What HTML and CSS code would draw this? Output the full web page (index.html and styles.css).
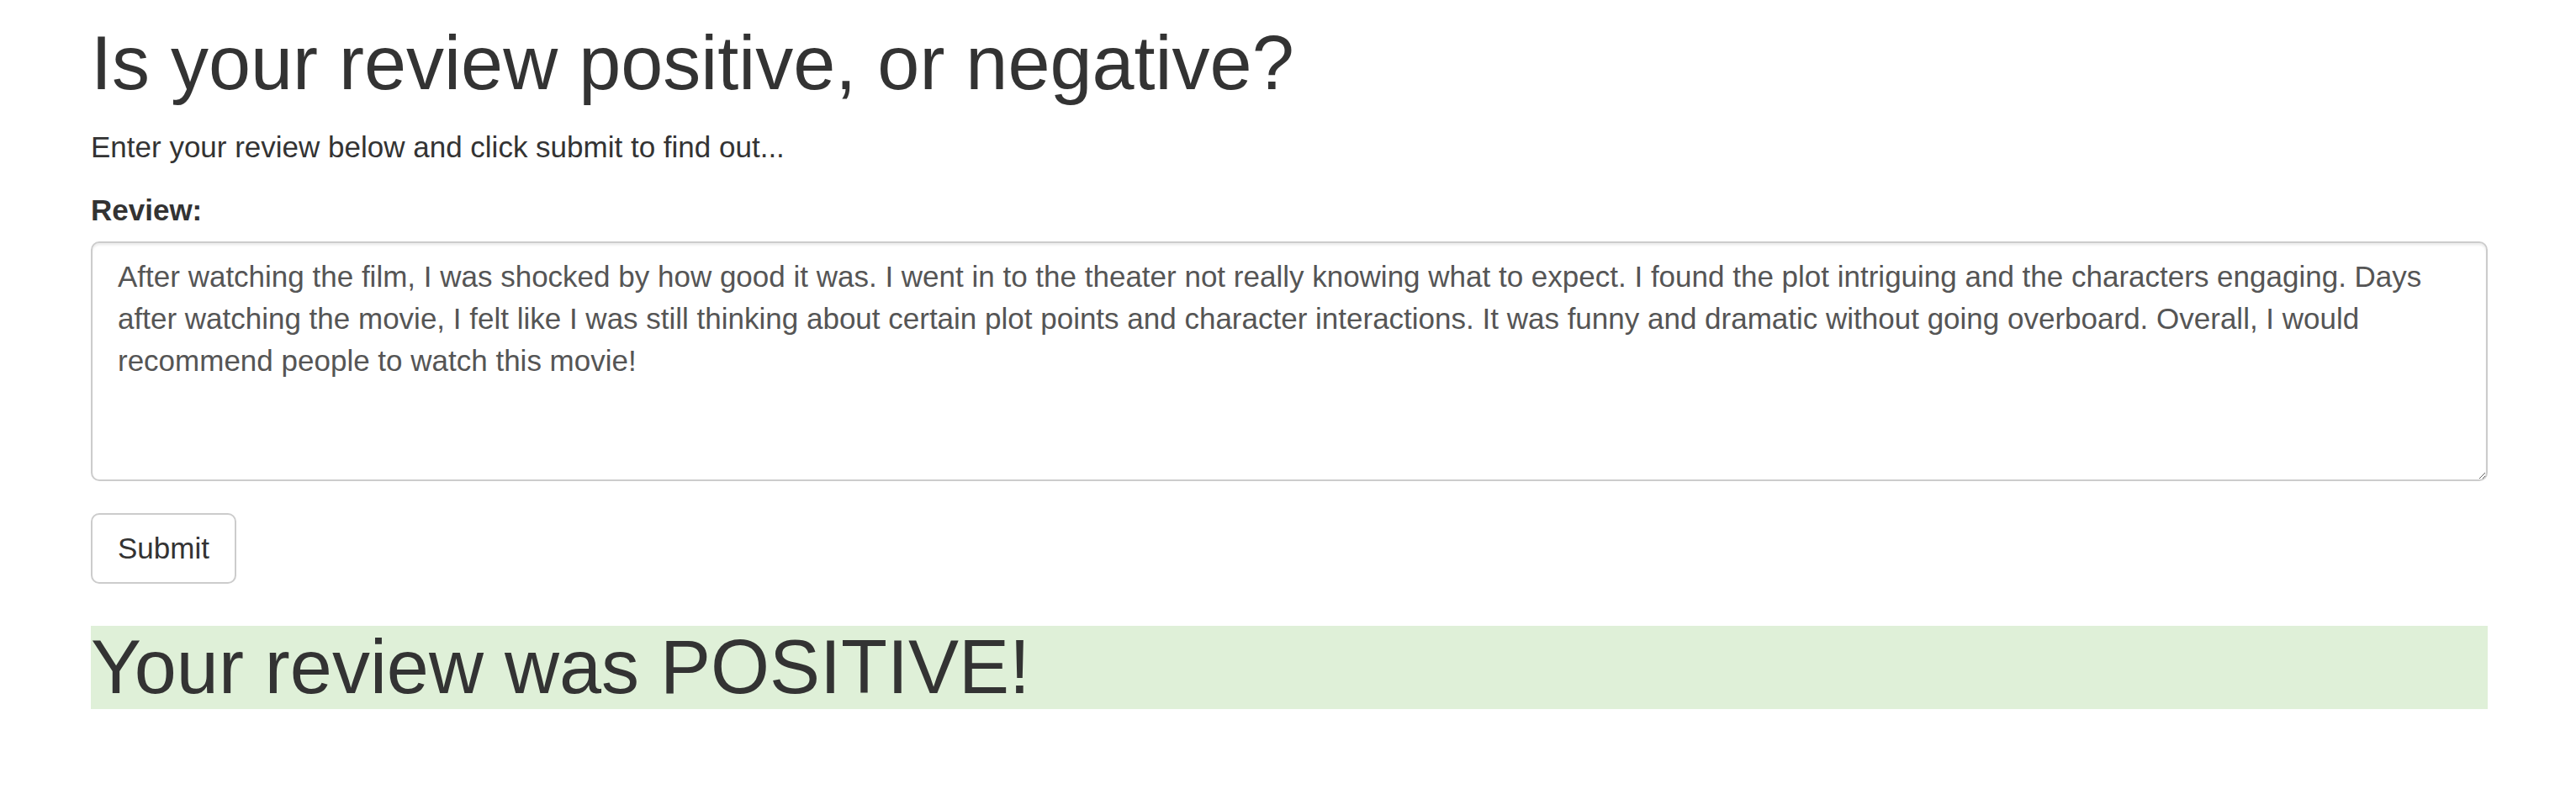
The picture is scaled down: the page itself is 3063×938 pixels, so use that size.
FILE: index.html
```html
<!DOCTYPE html>
<html lang="en">
<head>
<meta charset="utf-8">
<title>Sentiment Analysis</title>
<link rel="stylesheet" href="styles.css">
</head>
<body>
<div class="container">
  <h1 class="title">Is your review positive, or negative?</h1>
  <p class="lead-text">Enter your review below and click submit to find out...</p>
  <form class="review-form" onsubmit="return false;">
    <div class="form-group">
      <label class="form-label" for="review">Review:</label>
      <textarea class="form-control" id="review" rows="5">After watching the film, I was shocked by how good it was. I went in to the theater not really knowing what to expect. I found the plot intriguing and the characters engaging. Days after watching the movie, I felt like I was still thinking about certain plot points and character interactions. It was funny and dramatic without going overboard. Overall, I would recommend people to watch this movie!</textarea>
    </div>
    <button type="submit" class="btn">Submit</button>
  </form>
  <h1 class="result bg-success">Your review was POSITIVE!</h1>
</div>
</body>
</html>
```

FILE: styles.css
```css
* {
  box-sizing: border-box;
}

html, body {
  margin: 0;
  padding: 0;
  background: #fff;
}

body {
  font-family: "Liberation Sans", Arial, Helvetica, sans-serif;
  font-size: 35px;
  line-height: 50px;
  color: #333;
}

.container {
  width: 2850px;
  margin-left: 108px;
}

.title {
  font-size: 90px;
  font-weight: 500;
  line-height: 99px;
  margin: 25.5px 0 25px 0;
}

.lead-text {
  margin: 0 0 25px 0;
}

.review-form {
  margin: 0;
}

.form-group {
  margin-bottom: 37.5px;
}

.form-label {
  display: inline-block;
  font-weight: 700;
  margin-bottom: 12.5px;
}

.form-control {
  display: block;
  width: 100%;
  height: 285px;
  padding: 15px 30px;
  font-family: inherit;
  font-size: 35px;
  line-height: 50px;
  color: #555;
  background: #fff;
  border: 2.5px solid #ccc;
  border-radius: 10px;
  box-shadow: inset 0 2.5px 2.5px rgba(0, 0, 0, 0.075);
  resize: vertical;
  margin: 0;
}

.btn {
  display: inline-block;
  padding: 15px 30px;
  font-family: inherit;
  font-size: 35px;
  line-height: 50px;
  color: #333;
  background: #fff;
  border: 2.5px solid #ccc;
  border-radius: 10px;
  cursor: pointer;
  margin: 0;
}

.result {
  font-size: 90px;
  font-weight: 500;
  line-height: 99px;
  margin: 50px 0 25px 0;
}

.bg-success {
  background-color: #dff0d8;
}
```
